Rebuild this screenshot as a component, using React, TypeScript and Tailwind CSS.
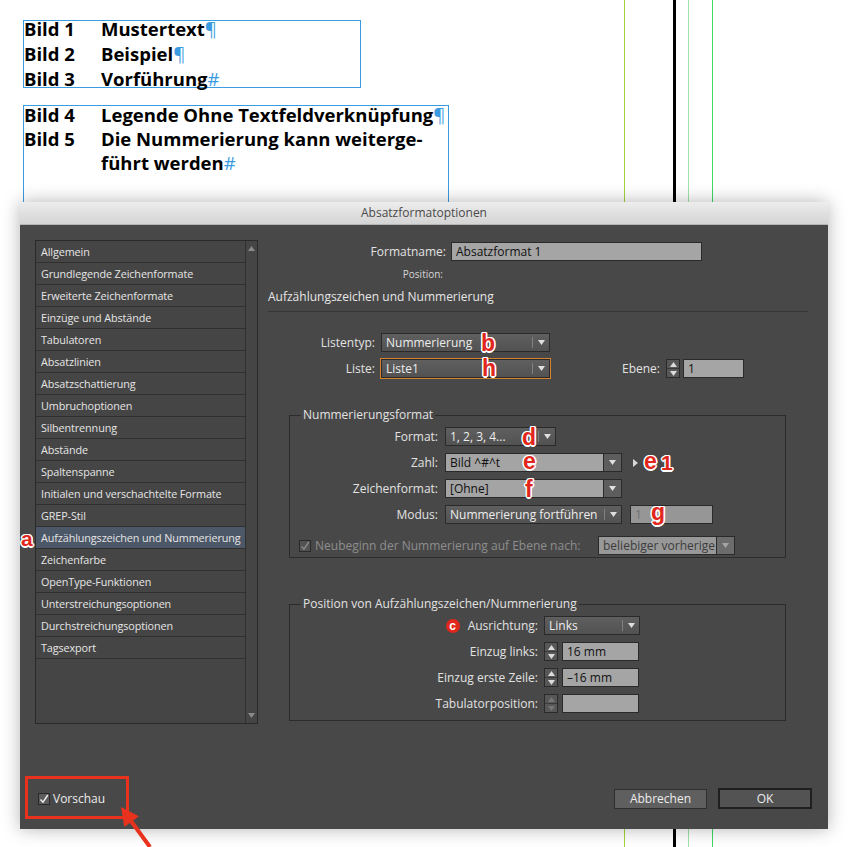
import React from "react";

const SANS = "font-['Open_Sans',sans-serif]";
const MARK =
  "absolute z-20 font-['Liberation_Sans',sans-serif] font-bold leading-none text-[#e1261c] [text-shadow:1.5px_0_0_#fff,-1.5px_0_0_#fff,0_1.5px_0_#fff,0_-1.5px_0_#fff,1px_1px_0_#fff,-1px_-1px_0_#fff,1px_-1px_0_#fff,-1px_1px_0_#fff]";

const listItems = [
  "Allgemein",
  "Grundlegende Zeichenformate",
  "Erweiterte Zeichenformate",
  "Einzüge und Abstände",
  "Tabulatoren",
  "Absatzlinien",
  "Absatzschattierung",
  "Umbruchoptionen",
  "Silbentrennung",
  "Abstände",
  "Spaltenspanne",
  "Initialen und verschachtelte Formate",
  "GREP-Stil",
  "Aufzählungszeichen und Nummerierung",
  "Zeichenfarbe",
  "OpenType-Funktionen",
  "Unterstreichungsoptionen",
  "Durchstreichungsoptionen",
  "Tagsexport",
];

function Caret({ up = false }: { up?: boolean }) {
  return (
    <svg width="7" height="5" viewBox="0 0 7 5">
      <path d={up ? "M0 5H7L3.5 0Z" : "M0 0H7L3.5 5Z"} fill="currentColor" />
    </svg>
  );
}

function Select({
  w,
  value,
  tone = "dark",
  focus = false,
}: {
  w: string;
  value: string;
  tone?: "dark" | "light" | "off";
  focus?: boolean;
}) {
  if (tone === "dark") {
    return (
      <div
        className={`flex h-[19px] ${w} border border-[#2a2a2a] bg-linear-to-b from-[#5f5f5f] to-[#525252] text-[#ededed] ${
          focus ? "outline outline-[#d5832f]" : ""
        }`}
      >
        <div className="flex-1 overflow-hidden whitespace-nowrap pl-[4px] text-[12px] leading-[17px]">
          {value}
        </div>
        <div className="my-[3px] w-px bg-[#808080]" />
        <div className="flex w-[16px] items-center justify-center text-[#dedede]">
          <Caret />
        </div>
      </div>
    );
  }
  const body = tone === "light" ? "bg-[#a4a4a4] text-[#111]" : "bg-[#989898] text-[#3c3c3c]";
  const arrow = tone === "light" ? "bg-[#5d5d5d] text-[#e0e0e0]" : "bg-[#6c6c6c] text-[#a5a5a5]";
  return (
    <div className={`flex h-[19px] ${w} border border-[#2a2a2a]`}>
      <div className={`flex-1 overflow-hidden whitespace-nowrap pl-[4px] text-[12px] leading-[17px] ${body}`}>
        {value}
      </div>
      <div className={`flex w-[18px] items-center justify-center border-l border-[#2a2a2a] ${arrow}`}>
        <Caret />
      </div>
    </div>
  );
}

function Field({ w, value = "", disabled = false }: { w: string; value?: string; disabled?: boolean }) {
  return (
    <div
      className={`h-[19px] ${w} border border-[#2a2a2a] pl-[4px] text-[12px] leading-[17px] ${
        disabled ? "bg-[#969696] text-[#707070]" : "bg-[#a5a5a5] text-[#111]"
      }`}
    >
      {value}
    </div>
  );
}

function Stepper({ disabled = false }: { disabled?: boolean }) {
  return (
    <div
      className={`flex h-[19px] w-[14px] flex-col border border-[#2a2a2a] bg-[#575757] ${
        disabled ? "text-[#767676]" : "text-[#dcdcdc]"
      }`}
    >
      <div className="flex flex-1 items-center justify-center border-b border-[#3a3a3a]">
        <Caret up />
      </div>
      <div className="flex flex-1 items-center justify-center">
        <Caret />
      </div>
    </div>
  );
}

function Check({ disabled = false }: { disabled?: boolean }) {
  return (
    <div
      className={`flex h-[12px] w-[12px] items-center justify-center border border-[#2a2a2a] ${
        disabled ? "bg-[#525252] text-[#8a8a8a]" : "bg-[#5c5c5c] text-[#f0f0f0]"
      }`}
    >
      <svg width="10" height="10" viewBox="0 0 10 10">
        <path d="M1.5 5.5L4 8.2L8.8 1" fill="none" stroke="currentColor" strokeWidth="1.4" />
      </svg>
    </div>
  );
}

function Line({ num, text, end }: { num: string; text: string; end: string }) {
  return (
    <div className="whitespace-nowrap">
      <span className="inline-block w-[77px]">{num}</span>
      {text}
      <span className="font-normal text-[#3b9be0]">{end}</span>
    </div>
  );
}

export default function App() {
  return (
    <div className={`relative h-[847px] w-[853px] overflow-hidden bg-white ${SANS}`}>
      {/* guides */}
      <div className="absolute left-[624px] top-0 h-full w-px bg-[#a3d43c]" />
      <div className="absolute left-[673px] top-0 h-full w-[3px] bg-black" />
      <div className="absolute left-[688px] top-0 h-full w-px bg-[#9fe2a8]" />
      <div className="absolute left-[712px] top-0 h-full w-px bg-[#3fd865]" />

      {/* document */}
      <div className="h-[202px] overflow-hidden pl-[23px] pt-[20px] text-[18.5px] font-bold text-black">
        <div className="h-[68px] w-[338px] border border-[#3b9be0]">
          <div className="-mt-[5px] leading-[25px]">
            <Line num="Bild 1" text="Mustertext" end="¶" />
            <Line num="Bild 2" text="Beispiel" end="¶" />
            <Line num="Bild 3" text="Vorführung" end="#" />
          </div>
        </div>
        <div className="mt-[17px] h-[120px] w-[426px] border border-[#3b9be0]">
          <div className="-mt-[3px] leading-[24px]">
            <Line num="Bild 4" text="Legende Ohne Textfeldverknüpfung" end="¶" />
            <Line num="Bild 5" text="Die Nummerierung kann weiterge-" end="" />
            <Line num="" text="führt werden" end="#" />
          </div>
        </div>
      </div>

      {/* dialog */}
      <div className="relative z-10 ml-[20px] h-[627px] w-[808px] rounded-t-[5px] shadow-[0_0_18px_rgba(0,0,0,0.3)]">
        <div className="flex h-[23px] items-center justify-center rounded-t-[5px] border-b border-[#b4b4b4] bg-linear-to-b from-[#ededed] to-[#d4d4d4] text-[12px] text-[#4a4a4a]">
          Absatzformatoptionen
        </div>
        <div className="flex h-[604px] flex-col bg-[#484848] pl-[15px] pr-[16px] pt-[15px] text-[#e2e2e2]">
          <div className="flex">
            {/* category list */}
            <div className="flex h-[484px] w-[223px] border border-[#2a2a2a] bg-[#454545]">
              <div className="min-w-0 flex-1">
                {listItems.map((item) => (
                  <div
                    key={item}
                    className={`h-[22px] overflow-hidden whitespace-nowrap border-b border-[#303030] pl-[5px] text-[10.8px] leading-[21px] tracking-[-0.1px] text-[#e6e6e6] ${
                      item.startsWith("Aufz") ? "bg-[#4c5767]" : ""
                    }`}
                  >
                    {item}
                  </div>
                ))}
              </div>
              <div className="flex w-[12px] flex-col items-center justify-between border-l border-[#303030] py-[5px] text-[#8a8a8a]">
                <Caret up />
                <Caret />
              </div>
            </div>

            {/* settings */}
            <div className="ml-[10px] w-[540px] text-[12px]">
              <div className="mt-[2px] flex h-[19px] items-center">
                <div className="w-[178px] text-right">Formatname:</div>
                <div className="ml-[5px]">
                  <Field w="w-[251px]" value="Absatzformat 1" />
                </div>
              </div>
              <div className="mt-[6px] flex h-[14px] items-center">
                <div className="w-[175px] text-right text-[10px] text-[#d6d6d6]">Position:</div>
              </div>
              <div className="mt-[8px] h-[16px] leading-[16px] text-[#e6e6e6]">
                Aufzählungszeichen und Nummerierung
              </div>
              <div className="mt-[6px] h-px bg-[#363636]" />

              <div className="mt-[21px] flex h-[19px] items-center">
                <div className="w-[107px] text-right">Listentyp:</div>
                <div className="ml-[6px]">
                  <Select w="w-[169px]" value="Nummerierung" />
                </div>
              </div>
              <div className="mt-[7px] flex h-[19px] items-center">
                <div className="w-[107px] text-right">Liste:</div>
                <div className="ml-[6px]">
                  <Select w="w-[169px]" value="Liste1" focus />
                </div>
                <div className="ml-[72px]">Ebene:</div>
                <div className="ml-[6px]">
                  <Stepper />
                </div>
                <div className="ml-[3px]">
                  <Field w="w-[61px]" value="1" />
                </div>
              </div>

              {/* Nummerierungsformat */}
              <div className="relative ml-[21px] mt-[37px] h-[143px] w-[497px] border border-[#2c2c2c] pt-[11px]">
                <span className="absolute -top-[9px] left-[11px] bg-[#484848] px-[2px] leading-[16px]">
                  Nummerierungsformat
                </span>
                <div className="flex h-[19px] items-center">
                  <div className="w-[148px] text-right">Format:</div>
                  <div className="ml-[7px]">
                    <Select w="w-[111px]" value="1, 2, 3, 4..." />
                  </div>
                </div>
                <div className="mt-[7px] flex h-[19px] items-center">
                  <div className="w-[148px] text-right">Zahl:</div>
                  <div className="ml-[7px]">
                    <Select w="w-[177px]" value="Bild ^#^t" tone="light" />
                  </div>
                  <svg className="ml-[11px]" width="5" height="8" viewBox="0 0 5 8">
                    <path d="M0 0L5 4L0 8Z" fill="#d8d8d8" />
                  </svg>
                </div>
                <div className="mt-[7px] flex h-[19px] items-center">
                  <div className="w-[148px] text-right">Zeichenformat:</div>
                  <div className="ml-[7px]">
                    <Select w="w-[177px]" value="[Ohne]" tone="light" />
                  </div>
                </div>
                <div className="mt-[7px] flex h-[19px] items-center">
                  <div className="w-[148px] text-right">Modus:</div>
                  <div className="ml-[7px]">
                    <Select w="w-[177px]" value="Nummerierung fortführen" />
                  </div>
                  <div className="ml-[8px]">
                    <Field w="w-[83px]" value="1" disabled />
                  </div>
                </div>
                <div className="mt-[12px] flex h-[19px] items-center">
                  <div className="ml-[9px]">
                    <Check disabled />
                  </div>
                  <div className="ml-[4px] w-[283px] whitespace-nowrap text-[#8e8e8e]">
                    Neubeginn der Nummerierung auf Ebene nach:
                  </div>
                  <Select w="w-[137px]" value="beliebiger vorherige" tone="off" />
                </div>
              </div>

              {/* Position */}
              <div className="relative ml-[21px] mt-[46px] h-[117px] w-[497px] border border-[#2c2c2c] pt-[11px]">
                <span className="absolute -top-[9px] left-[11px] bg-[#484848] px-[2px] leading-[16px]">
                  Position von Aufzählungszeichen/Nummerierung
                </span>
                <div className="flex h-[19px] items-center">
                  <div className="flex w-[248px] items-center justify-end">
                    <span className="mr-[8px] flex h-[14px] w-[14px] items-center justify-center rounded-full bg-[#e1261c] font-['Liberation_Sans',sans-serif] text-[12px] font-bold leading-none text-white">
                      c
                    </span>
                    Ausrichtung:
                  </div>
                  <div className="ml-[6px]">
                    <Select w="w-[96px]" value="Links" />
                  </div>
                </div>
                <div className="mt-[7px] flex h-[19px] items-center">
                  <div className="w-[248px] text-right">Einzug links:</div>
                  <div className="ml-[6px]">
                    <Stepper />
                  </div>
                  <div className="ml-[4px]">
                    <Field w="w-[77px]" value="16 mm" />
                  </div>
                </div>
                <div className="mt-[7px] flex h-[19px] items-center">
                  <div className="w-[248px] text-right">Einzug erste Zeile:</div>
                  <div className="ml-[6px]">
                    <Stepper />
                  </div>
                  <div className="ml-[4px]">
                    <Field w="w-[77px]" value="–16 mm" />
                  </div>
                </div>
                <div className="mt-[7px] flex h-[19px] items-center">
                  <div className="w-[248px] text-right">Tabulatorposition:</div>
                  <div className="ml-[6px]">
                    <Stepper disabled />
                  </div>
                  <div className="ml-[4px]">
                    <Field w="w-[77px]" />
                  </div>
                </div>
              </div>
            </div>
          </div>

          {/* footer */}
          <div className="mt-[64px] flex h-[21px] items-center">
            <div className="ml-[3px]">
              <Check />
            </div>
            <div className="ml-[3px] text-[12px] text-[#ececec]">Vorschau</div>
            <div className="ml-auto flex items-center">
              <button
                type="button"
                className="h-[20px] w-[93px] border border-[#2e2e2e] bg-[#5f5f5f] text-[12px] leading-[18px] text-[#ececec]"
              >
                Abbrechen
              </button>
              <button
                type="button"
                className="ml-[11px] h-[21px] w-[94px] border-2 border-[#1f1f1f] bg-[#535353] text-[12px] leading-[17px] text-[#ececec]"
              >
                OK
              </button>
            </div>
          </div>
        </div>
      </div>

      {/* annotations */}
      <span className={`${MARK} left-[21px] top-[528px] text-[21px]`}>a</span>
      <span className={`${MARK} left-[481px] top-[332px] text-[23px]`}>b</span>
      <span className={`${MARK} left-[482px] top-[357px] text-[23px]`}>h</span>
      <span className={`${MARK} left-[522px] top-[426px] text-[23px]`}>d</span>
      <span className={`${MARK} left-[523px] top-[450px] text-[23px]`}>e</span>
      <span className={`${MARK} left-[644px] top-[450px] text-[23px]`}>e</span>
      <span className={`${MARK} left-[661px] top-[452px] text-[21px]`}>1</span>
      <span className={`${MARK} left-[525px] top-[478px] text-[23px]`}>f</span>
      <span className={`${MARK} left-[651px] top-[501px] text-[23px]`}>g</span>
      <div className="absolute left-[25px] top-[776px] z-20 h-[43px] w-[104px] border-[3px] border-[#e8321e]" />
      <svg className="absolute left-[100px] top-[800px] z-20" width="60" height="47" viewBox="0 0 60 47">
        <path d="M21 7L24.3 27L38.9 16.3Z" fill="#e8321e" />
        <path d="M31 21L50 47" stroke="#e8321e" strokeWidth="4" />
      </svg>
    </div>
  );
}
